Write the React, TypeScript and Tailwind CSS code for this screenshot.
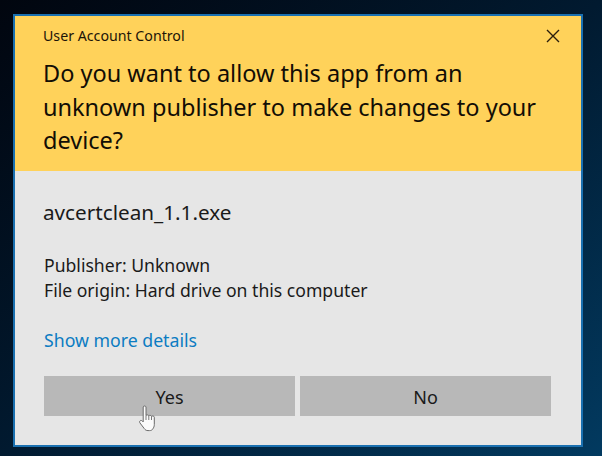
const font = { fontFamily: '"Noto Sans", "Open Sans", sans-serif' };

function HandCursor() {
  return (
    <svg
      className="absolute left-[139px] top-[404px]"
      width="20"
      height="28"
      viewBox="0 0 20 28"
      fill="none"
    >
      <path
        d="M4.200 3c0-1.300 2.800-1.300 2.800 0v8.500c.5-.8 2.600-.8 2.800.3.500-.7 2.500-.6 2.700.5.600-.6 2.700-.5 2.800.9v7.300c0 2-.6 3-1.400 4.300-.8 1.300-1.800 1.800-3.400 1.800H9c-1.800 0-2.800-.7-3.800-2.100L1 19c-.7-1-.4-2 .3-2.400.8-.4 1.700-.2 2.900 1.300z"
        fill="#fbfbfb"
        stroke="#6a6a6a"
        strokeWidth="1"
      />
      <path d="M7 11.500v4.500M9.800 11.800v4.200M12.500 12.300v3.700" stroke="#6a6a6a" strokeWidth="0.9" />
    </svg>
  );
}

export default function App() {
  return (
    <div
      className="relative flex h-[456px] w-[602px] items-start overflow-hidden bg-gradient-to-br from-[#01060f] via-[#011a30] to-[#023a60] pl-[13px] pt-[14px]"
      style={font}
    >
      <div className="flex h-[433px] w-[570px] flex-col border-[2px] border-[#1a70b0] bg-[#e6e6e6]">
        <div className="flex h-[155px] flex-col bg-[#ffd25a] pl-[28px] pr-[20px] text-[#1c1408]">
          <div className="flex h-[38px] items-center justify-between pt-[1px]">
            <span className="text-[14.200px]">User Account Control</span>
            <svg className="mr-[1px]" width="14" height="14" viewBox="0 0 14 14">
              <path d="M1 1l12 12M13 1L1 13" stroke="#2a1e0c" strokeWidth="1.400" />
            </svg>
          </div>
          <h1 className="mt-[3px] text-[23.500px] leading-[33.500px] font-normal text-[#120d05]">
            Do you want to allow this app from an unknown publisher to make changes to your device?
          </h1>
        </div>
        <div className="flex flex-1 flex-col px-[28px] text-[#1a1a1a]">
          <div className="mt-[26px] text-[20.700px] leading-[30px]">avcertclean_1.1.exe</div>
          <div className="mt-[26px] pl-[1px] text-[17.600px] leading-[25px]">
            <div>Publisher: Unknown</div>
            <div>File origin: Hard drive on this computer</div>
          </div>
          <div className="mt-[24px] pl-[1px] text-[17.700px] leading-[26px] text-[#0c7cc2]">Show more details</div>
          <div className="mt-[23px] ml-[1px] flex gap-[5px]">
            <div className="flex h-[40px] w-[251px] items-center justify-center bg-[#b8b8b8] pt-[2px] text-[18px]">
              Yes
            </div>
            <div className="flex h-[40px] w-[251px] items-center justify-center bg-[#b8b8b8] pt-[2px] text-[18px]">
              No
            </div>
          </div>
        </div>
      </div>
      <HandCursor />
    </div>
  );
}
